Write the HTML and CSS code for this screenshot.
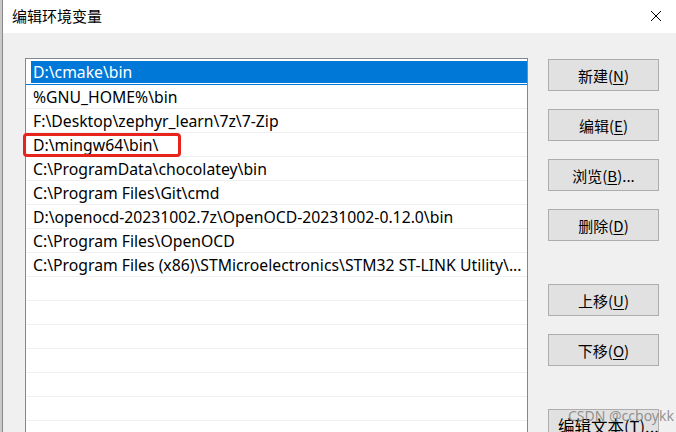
FILE: index.html
```html
<!DOCTYPE html>
<html lang="zh-CN">
  <head>
    <meta charset="utf-8" />
    <title>编辑环境变量</title>
    <link rel="stylesheet" href="styles.css">
  </head>
  <body>
    <div class="edge"></div>
    <div class="window">
      <div class="titlebar">
        <span class="title">编辑环境变量</span>
        <svg class="close" width="12" height="12" viewBox="0 0 12 12">
          <path d="M1 1 L11 11 M11 1 L1 11" stroke="#000" stroke-width="1" fill="none"/>
        </svg>
      </div>
      <div class="content">
        <div class="list">
          <div class="row selected"><div class="cell">D:\cmake\bin</div></div>
          <div class="row"><div class="cell">%GNU_HOME%\bin</div></div>
          <div class="row"><div class="cell">F:\Desktop\zephyr_learn\7z\7-Zip</div></div>
          <div class="row"><div class="cell">D:\mingw64\bin\</div></div>
          <div class="row"><div class="cell">C:\ProgramData\chocolatey\bin</div></div>
          <div class="row"><div class="cell">C:\Program Files\Git\cmd</div></div>
          <div class="row"><div class="cell">D:\openocd-20231002.7z\OpenOCD-20231002-0.12.0\bin</div></div>
          <div class="row"><div class="cell">C:\Program Files\OpenOCD</div></div>
          <div class="row"><div class="cell">C:\Program Files (x86)\STMicroelectronics\STM32 ST-LINK Utility\...</div></div>
          <div class="row"><div class="cell"></div></div>
          <div class="row"><div class="cell"></div></div>
          <div class="row"><div class="cell"></div></div>
          <div class="row"><div class="cell"></div></div>
          <div class="row"><div class="cell"></div></div>
          <div class="row"><div class="cell"></div></div>
          <div class="row"><div class="cell"></div></div>
          <div class="mark"></div>
        </div>
        <div class="buttons">
          <div class="btn">新建(<u>N</u>)</div>
          <div class="btn">编辑(<u>E</u>)</div>
          <div class="btn">浏览(<u>B</u>)...</div>
          <div class="btn">删除(<u>D</u>)</div>
          <div class="btn spaced">上移(<u>U</u>)</div>
          <div class="btn">下移(<u>O</u>)</div>
          <div class="btn spaced last">编辑文本(<u>T</u>)...
            <span class="watermark">CSDN @ccboykk</span>
          </div>
        </div>
      </div>
    </div>
  </body>
</html>
```

FILE: styles.css
```css
html, body {
    margin: 0;
    height: 432px;
    overflow: hidden;
}

body {
    display: flex;
    font-family: "Noto Sans", "Noto Sans CJK SC", sans-serif;
    color: #000;
    background: #f0f0f0;
}

.edge {
    width: 2px;
    flex: none;
    background: #c9c9c9;
}

.window {
    flex: 1;
    border-left: 1px solid #8a8a8a;
    display: flex;
    flex-direction: column;
}

.titlebar {
    box-sizing: border-box;
    height: 33px;
    flex: none;
    background: #fff;
    display: flex;
    align-items: center;
    justify-content: space-between;
    padding: 0 14px 2px 9px;
}

.title {
    font-family: "Noto Sans CJK SC", sans-serif;
    font-size: 15px;
}

.close {
    display: block;
}

.content {
    display: flex;
    padding: 25px 0 0 22px;
}

.list {
    position: relative;
    width: 501px;
    height: 400px;
    border: 1px solid #828790;
    background: #fff;
    padding-top: 1px;
    flex: none;
}

.row {
    height: 23px;
    border-bottom: 1px solid #f0f0f0;
}

.cell {
    height: 23px;
    margin-left: 5px;
    padding-left: 2px;
    font-size: 15.75px;
    line-height: 24px;
    white-space: nowrap;
    overflow: hidden;
    color: #000;
}

.selected {
    border-bottom-color: #0078d7;
}

.selected .cell {
    background: #0078d7;
    color: #fff;
    height: 22px;
    margin-top: 1px;
    line-height: 22px;
}

.mark {
    position: absolute;
    left: -3px;
    top: 74px;
    width: 158px;
    height: 24px;
    box-sizing: border-box;
    border: 3px solid #e8231c;
    border-radius: 4px;
}

.buttons {
    margin-left: 20px;
    padding-top: 1px;
    display: flex;
    flex-direction: column;
    gap: 18px;
}

.btn {
    position: relative;
    width: 109px;
    height: 30px;
    border: 1px solid #adadad;
    background: #e1e1e1;
    display: flex;
    align-items: center;
    justify-content: center;
    font-size: 15px;
    font-family: "Noto Sans CJK SC", sans-serif;
}

.btn u {
    text-underline-offset: 2px;
}

.spaced {
    margin-top: 25px;
}

.last {
    align-items: flex-start;
    justify-content: flex-start;
    padding: 4px 0 0 9px;
    width: 100px;
    height: 26px;
    font-size: 16.5px;
    white-space: nowrap;
}

.watermark {
    position: absolute;
    left: 19px;
    top: -4px;
    font-family: "Noto Sans", sans-serif;
    font-size: 14px;
    color: rgba(130, 130, 130, 0.85);
    white-space: nowrap;
}
```
